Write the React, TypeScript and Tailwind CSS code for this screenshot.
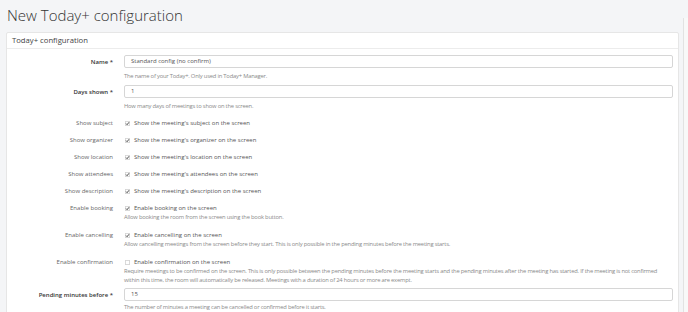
import React from 'react';

const font = { fontFamily: '"Open Sans", "Noto Sans", sans-serif' };

const Check = ({ checked }: { checked: boolean }) => (
  <svg width="5" height="5" viewBox="0 0 10 10" className="shrink-0">
    <rect x="0.5" y="0.5" width="9" height="9" rx="1" fill="#fff" stroke="#9a9a9a" />
    {checked && <path d="M2.2 5.2 L4.2 7.4 L7.9 2.6" fill="none" stroke="#333" strokeWidth="1.8" />}
  </svg>
);

const Label = ({ children, bold }: { children: React.ReactNode; bold?: boolean }) => (
  <div className={`text-right text-[6px] leading-[8px] ${bold ? 'font-semibold text-[#333]' : 'text-[#666]'}`}>{children}</div>
);

const Help = ({ children, className = '' }: { children: React.ReactNode; className?: string }) => (
  <div className={`grid grid-cols-[106px_1fr] gap-x-[11px] ${className}`}>
    <div />
    <div className="text-[5.8px] leading-[9px] tracking-[-0.2px] text-[#8a8a8a] pr-[4px]">{children}</div>
  </div>
);

const InputRow = ({ label, value, className = '' }: { label: string; value: string; className?: string }) => (
  <div className={`grid grid-cols-[106px_1fr] gap-x-[11px] items-center ${className}`}>
    <Label bold>{label} *</Label>
    <div className="h-[13px] border border-[#d6d6d6] rounded-[2px] pl-[6px] flex items-center text-[6px] text-[#555]">{value}</div>
  </div>
);

const CheckRow = ({ label, text, checked = true, className = '' }: { label: string; text: string; checked?: boolean; className?: string }) => (
  <div className={`grid grid-cols-[106px_1fr] gap-x-[11px] items-center h-[8px] ${className}`}>
    <Label>{label}</Label>
    <div className="flex items-center gap-[4px] pl-[1px] text-[6px] leading-[8px] text-[#555]">
      <Check checked={checked} />
      <span>{text}</span>
    </div>
  </div>
);

export default function App() {
  return (
    <div style={font} className="relative w-[688px] h-[312px] overflow-hidden bg-[#f4f5f7]">
      <div className="absolute right-0 top-[18px] bottom-0 w-[5px] border-l border-[#e2e2e2] bg-[#f8f8f8]" />
      <h1 className="pl-[7px] pt-[4px] h-[32px] text-[15px] leading-[22px] font-light text-[#333]">New Today+ configuration</h1>
      <div className="ml-[6px] w-[673px] bg-white border border-[#e6e6e6] rounded-[2px] h-[300px]">
        <div className="h-[16px] border-b border-[#ececec] pl-[5px] text-[7.7px] leading-[15px] text-[#444]">Today+ configuration</div>
        <div className="pr-[5px]">
          <InputRow label="Name" value="Standard config (no confirm)" className="mt-[6px]" />
          <Help className="mt-[4px]">The name of your Today+. Only used in Today+ Manager.</Help>
          <InputRow label="Days shown" value="1" className="mt-[4px]" />
          <Help className="mt-[4px]">How many days of meetings to show on the screen.</Help>
          <CheckRow label="Show subject" text="Show the meeting's subject on the screen" className="mt-[8px]" />
          <CheckRow label="Show organizer" text="Show the meeting's organizer on the screen" className="mt-[9px]" />
          <CheckRow label="Show location" text="Show the meeting's location on the screen" className="mt-[9px]" />
          <CheckRow label="Show attendees" text="Show the meeting's attendees on the screen" className="mt-[9px]" />
          <CheckRow label="Show description" text="Show the meeting's description on the screen" className="mt-[9px]" />
          <CheckRow label="Enable booking" text="Enable booking on the screen" className="mt-[9px]" />
          <Help className="mt-[1px]">Allow booking the room from the screen using the book button.</Help>
          <CheckRow label="Enable cancelling" text="Enable cancelling on the screen" className="mt-[9px]" />
          <Help className="mt-[1px]">Allow cancelling meetings from the screen before they start. This is only possible in the pending minutes before the meeting starts.</Help>
          <CheckRow label="Enable confirmation" text="Enable confirmation on the screen" checked={false} className="mt-[9px]" />
          <Help className="mt-[1px]">Require meetings to be confirmed on the screen. This is only possible between the pending minutes before the meeting starts and the pending minutes after the meeting has started. If the meeting is not confirmed within this time, the room will automatically be released. Meetings with a duration of 24 hours or more are exempt.</Help>
          <InputRow label="Pending minutes before" value="15" className="mt-[3px]" />
          <Help className="mt-[2px]">The number of minutes a meeting can be cancelled or confirmed before it starts.</Help>
        </div>
      </div>
    </div>
  );
}
